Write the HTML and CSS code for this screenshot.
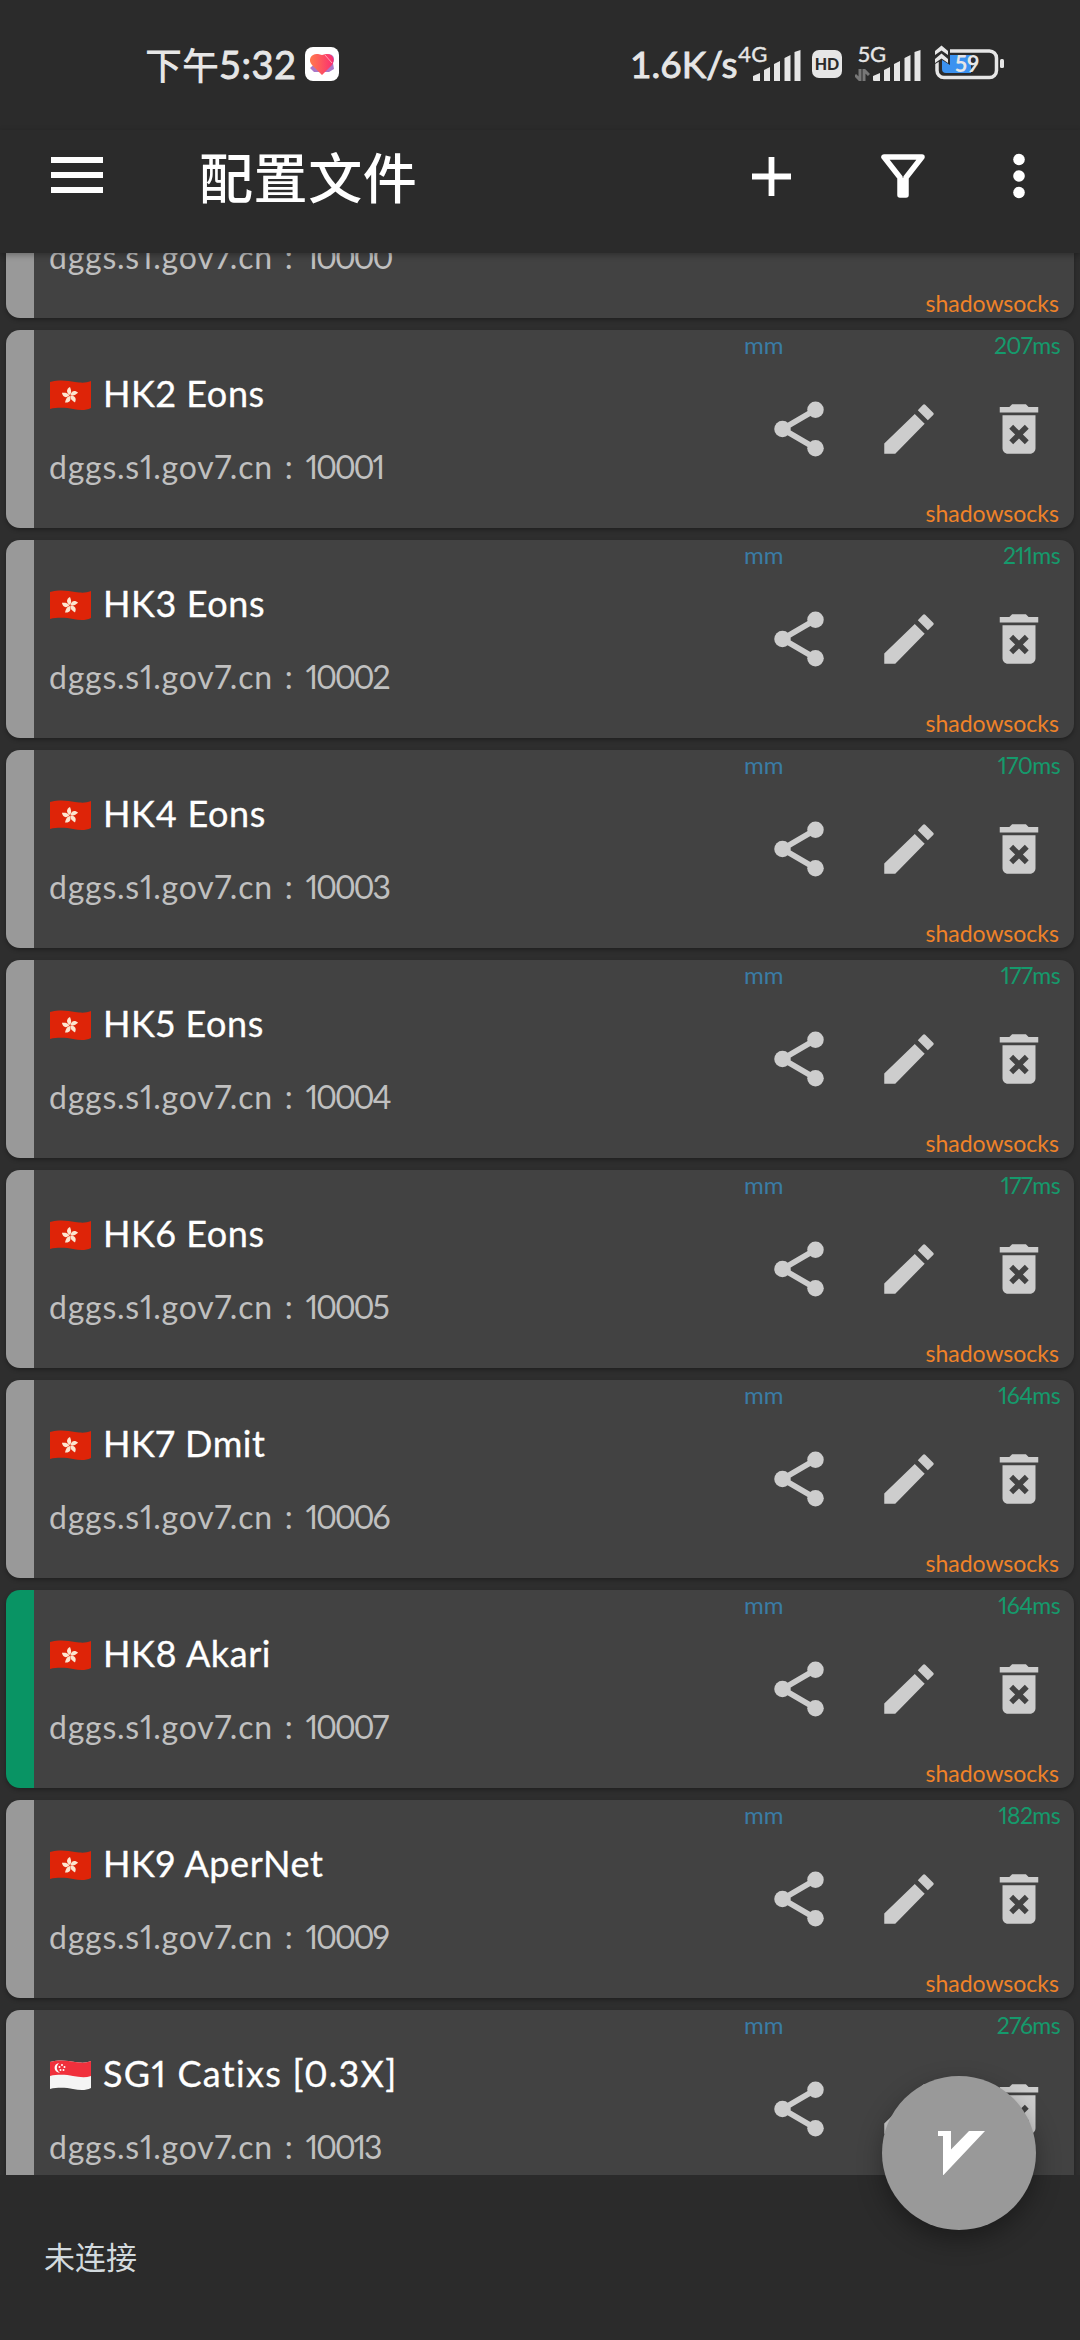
FILE: index.html
```html
<!DOCTYPE html>
<html lang="zh-CN">
<head>
    <meta charset="UTF-8">
    <meta name="viewport" content="width=device-width, initial-scale=1.0">
    <title>配置文件</title>
    <link rel="stylesheet" href="styles.css">
</head>
<body>
    <!-- Shared icons -->
    <svg class="sprites">
        <symbol id="share" viewBox="0 0 24 24">
            <path d="M6 12L18 5M6 12l12 7" fill="none" stroke="currentColor" stroke-width="2"/>
            <circle cx="6" cy="12" r="3"/><circle cx="18" cy="5" r="3"/><circle cx="18" cy="19" r="3"/>
        </symbol>
        <symbol id="edit" viewBox="0 0 24 24">
            <path d="M3 17.25V21h4l10.700-10.900-3.600-3.600L3 17.250zM20.800 6.900c.25-.25.25-.55 0-.8l-2.900-2.900c-.25-.25-.55-.25-.8 0l-1.900 2 3.650 3.650 1.950-1.950z"/>
        </symbol>
        <symbol id="delete" viewBox="0 0 24 24">
            <path d="M6 19c0 1.1.9 2 2 2h8c1.1 0 2-.9 2-2V7H6v12zm2.46-7.12l1.41-1.41L12 12.59l2.12-2.12 1.41 1.41L13.41 14l2.12 2.12-1.41 1.41L12 15.41l-2.12 2.12-1.41-1.41L10.59 14l-2.13-2.12zM15.5 4l-1-1h-5l-1 1H5v2h14V4z"/>
        </symbol>
        <symbol id="hk" viewBox="0 0 43 31">
            <path d="M1 2C12-1 19 1 26 2s11 1 16-1v27c-6 3-12 2-18 1s-14-2-23 0z" fill="#de2408"/>
            <g fill="#fbe6d0">
                <path d="M21 15c-4-2-4-6 0-8 1 3 2 5 0 8z"/>
                <path d="M21 15c-4-2-4-6 0-8 1 3 2 5 0 8z" transform="rotate(72 21 15.5)"/>
                <path d="M21 15c-4-2-4-6 0-8 1 3 2 5 0 8z" transform="rotate(144 21 15.5)"/>
                <path d="M21 15c-4-2-4-6 0-8 1 3 2 5 0 8z" transform="rotate(216 21 15.5)"/>
                <path d="M21 15c-4-2-4-6 0-8 1 3 2 5 0 8z" transform="rotate(288 21 15.5)"/>
            </g>
        </symbol>
        <symbol id="sg" viewBox="0 0 43 31">
            <path d="M1 2C12-1 19 1 26 2s11 1 16-1v27c-6 3-12 2-18 1s-14-2-23 0z" fill="#f4f4f4"/>
            <path d="M1 2C12-1 19 1 26 2s11 1 16-1v15c-6 2-12 1-18 0s-14-2-23 0z" fill="#f0303c"/>
            <path d="M10 3c-6 1-6 9 1 10-4-3-4-7-1-10z" fill="#fff"/>
            <g fill="#fff"><circle cx="13" cy="5" r="1"/><circle cx="10.5" cy="7" r="1"/><circle cx="15.5" cy="7" r="1"/><circle cx="11.5" cy="10" r="1"/><circle cx="14.5" cy="10" r="1"/></g>
        </symbol>
        <symbol id="signal" viewBox="0 0 48 31">
            <path d="M0 26l7-3v8H1q-1 0-1-1zM11 20l6-3v14h-6zM21 14l6-3v20h-6zM31.500 8l6-3v26h-6zM41.500 2l6-2v31h-6z"/>
        </symbol>
    </svg>

    <div class="status-bar">
        <div class="clock"><span class="clock-cn">下午</span><span class="clock-num">5:32</span></div>
        <svg class="app-icon" viewBox="0 0 34 34">
            <defs>
                <linearGradient id="heart" x1="0" y1="0" x2="1" y2="0">
                    <stop offset="0" stop-color="#ff7a4d"/><stop offset="1" stop-color="#fb2d72"/>
                </linearGradient>
            </defs>
            <rect width="34" height="34" rx="8" fill="#fff"/>
            <path d="M20 8q6-2 8 1t0 7l1 6-5 3H9l-4-4z" fill="#a978c8"/>
            <path d="M17 28L7 18C2 12 7 6 13 7l4 1 4-1c6-1 10 5 6 11z" fill="url(#heart)"/>
            <path d="M20 8l7 8" stroke="#ffa0b4" stroke-width="1"/>
        </svg>
        <div class="speed">1.6K/s</div>
        <div class="network">
            <span class="network-type">4G</span>
            <svg class="signal"><use href="#signal"/></svg>
        </div>
        <div class="hd">HD</div>
        <div class="network second">
            <span class="network-type">5G</span>
            <svg class="traffic" viewBox="0 0 15 12"><path d="M5 0v11L0 6M9 12V1l5 5" fill="none" stroke="#777" stroke-width="3"/></svg>
            <svg class="signal"><use href="#signal"/></svg>
        </div>
        <div class="battery">
            <svg viewBox="0 0 70 36">
                <rect x="2" y="6" width="59.5" height="26.5" rx="7" fill="none" stroke="#e6e6e6" stroke-width="3.5"/>
                <rect x="65" y="14" width="4" height="9" rx="1.5" fill="#e6e6e6"/>
                <path d="M7 10h29v18H11q-4 0-4-4z" fill="#3b92f0"/>
                <path d="M0 0h15v20l-8-5-7 4z" fill="#2b2b2b"/>
                <path d="M0 6l6.500-5.500L13 6v4L6.500 5.500 0 10zM0 14l6.500-5.500L13 14v4l-6.500-4.500L0 18z" fill="#e6e6e6"/>
            </svg>
            <span class="battery-level">59</span>
        </div>
    </div>

    <div class="toolbar">
        <svg class="menu-icon" viewBox="0 0 52 36"><path d="M0 3h52M0 18h52M0 33h52" stroke="#fff" stroke-width="6"/></svg>
        <h1 class="toolbar-title">配置文件</h1>
        <svg class="add-icon" viewBox="0 0 39 39"><path d="M19.500 0v39M0 19.500h39" stroke="#fff" stroke-width="5.8"/></svg>
        <svg class="filter-icon" viewBox="0 0 44 44">
            <path d="M3 3h38L25 23.500v17.500h-6V23.500z" fill="none" stroke="#fff" stroke-width="5.5" stroke-linejoin="round"/>
            <path d="M18 24h8v18h-8z" fill="#fff"/>
        </svg>
        <svg class="more-icon" viewBox="0 0 12 46"><circle cx="6" cy="6.5" r="5.8"/><circle cx="6" cy="23" r="5.8"/><circle cx="6" cy="39.5" r="5.8"/></svg>
    </div>

    <div class="list">
        <div class="card scrolled">
            <div class="card-info">
                <div class="card-address">dggs.s1.gov7.cn : <span class="port">10000</span></div>
            </div>
            <div class="card-side">
                <div class="protocol">shadowsocks</div>
            </div>
        </div>

        <div class="card">
            <div class="card-info">
                <div class="card-name"><svg class="flag"><use href="#hk"/></svg>HK2 Eons</div>
                <div class="card-address">dggs.s1.gov7.cn : <span class="port">10001</span></div>
            </div>
            <div class="card-side">
                <div class="card-tags"><span class="group">mm</span><span class="ping">207ms</span></div>
                <div class="card-actions"><svg><use href="#share"/></svg><svg><use href="#edit"/></svg><svg><use href="#delete"/></svg></div>
                <div class="protocol">shadowsocks</div>
            </div>
        </div>

        <div class="card">
            <div class="card-info">
                <div class="card-name"><svg class="flag"><use href="#hk"/></svg>HK3 Eons</div>
                <div class="card-address">dggs.s1.gov7.cn : <span class="port">10002</span></div>
            </div>
            <div class="card-side">
                <div class="card-tags"><span class="group">mm</span><span class="ping">211ms</span></div>
                <div class="card-actions"><svg><use href="#share"/></svg><svg><use href="#edit"/></svg><svg><use href="#delete"/></svg></div>
                <div class="protocol">shadowsocks</div>
            </div>
        </div>

        <div class="card">
            <div class="card-info">
                <div class="card-name"><svg class="flag"><use href="#hk"/></svg>HK4 Eons</div>
                <div class="card-address">dggs.s1.gov7.cn : <span class="port">10003</span></div>
            </div>
            <div class="card-side">
                <div class="card-tags"><span class="group">mm</span><span class="ping">170ms</span></div>
                <div class="card-actions"><svg><use href="#share"/></svg><svg><use href="#edit"/></svg><svg><use href="#delete"/></svg></div>
                <div class="protocol">shadowsocks</div>
            </div>
        </div>

        <div class="card">
            <div class="card-info">
                <div class="card-name"><svg class="flag"><use href="#hk"/></svg>HK5 Eons</div>
                <div class="card-address">dggs.s1.gov7.cn : <span class="port">10004</span></div>
            </div>
            <div class="card-side">
                <div class="card-tags"><span class="group">mm</span><span class="ping">177ms</span></div>
                <div class="card-actions"><svg><use href="#share"/></svg><svg><use href="#edit"/></svg><svg><use href="#delete"/></svg></div>
                <div class="protocol">shadowsocks</div>
            </div>
        </div>

        <div class="card">
            <div class="card-info">
                <div class="card-name"><svg class="flag"><use href="#hk"/></svg>HK6 Eons</div>
                <div class="card-address">dggs.s1.gov7.cn : <span class="port">10005</span></div>
            </div>
            <div class="card-side">
                <div class="card-tags"><span class="group">mm</span><span class="ping">177ms</span></div>
                <div class="card-actions"><svg><use href="#share"/></svg><svg><use href="#edit"/></svg><svg><use href="#delete"/></svg></div>
                <div class="protocol">shadowsocks</div>
            </div>
        </div>

        <div class="card">
            <div class="card-info">
                <div class="card-name"><svg class="flag"><use href="#hk"/></svg>HK7 Dmit</div>
                <div class="card-address">dggs.s1.gov7.cn : <span class="port">10006</span></div>
            </div>
            <div class="card-side">
                <div class="card-tags"><span class="group">mm</span><span class="ping">164ms</span></div>
                <div class="card-actions"><svg><use href="#share"/></svg><svg><use href="#edit"/></svg><svg><use href="#delete"/></svg></div>
                <div class="protocol">shadowsocks</div>
            </div>
        </div>

        <div class="card selected">
            <div class="card-info">
                <div class="card-name"><svg class="flag"><use href="#hk"/></svg>HK8 Akari</div>
                <div class="card-address">dggs.s1.gov7.cn : <span class="port">10007</span></div>
            </div>
            <div class="card-side">
                <div class="card-tags"><span class="group">mm</span><span class="ping">164ms</span></div>
                <div class="card-actions"><svg><use href="#share"/></svg><svg><use href="#edit"/></svg><svg><use href="#delete"/></svg></div>
                <div class="protocol">shadowsocks</div>
            </div>
        </div>

        <div class="card">
            <div class="card-info">
                <div class="card-name"><svg class="flag"><use href="#hk"/></svg>HK9 AperNet</div>
                <div class="card-address">dggs.s1.gov7.cn : <span class="port">10009</span></div>
            </div>
            <div class="card-side">
                <div class="card-tags"><span class="group">mm</span><span class="ping">182ms</span></div>
                <div class="card-actions"><svg><use href="#share"/></svg><svg><use href="#edit"/></svg><svg><use href="#delete"/></svg></div>
                <div class="protocol">shadowsocks</div>
            </div>
        </div>

        <div class="card">
            <div class="card-info">
                <div class="card-name wide"><svg class="flag"><use href="#sg"/></svg>SG1 Catixs [0.3X]</div>
                <div class="card-address">dggs.s1.gov7.cn : <span class="port">10013</span></div>
            </div>
            <div class="card-side">
                <div class="card-tags"><span class="group">mm</span><span class="ping">276ms</span></div>
                <div class="card-actions"><svg><use href="#share"/></svg><svg><use href="#edit"/></svg><svg><use href="#delete"/></svg></div>
            </div>
        </div>
    </div>

    <div class="footer">
        <span>未连接</span>
        <button class="fab">
            <svg viewBox="0 0 47 44"><path d="M0 0h13v18.500L31 0h16L5.500 44H5V5H0z"/></svg>
        </button>
    </div>
</body>
</html>
```
FILE: styles.css
```css
* {
    box-sizing: border-box;
}

body {
    margin: 0;
    width: 1080px;
    height: 2340px;
    display: flex;
    flex-direction: column;
    overflow: hidden;
    background: #2b2b2b;
    color: #fff;
    font-family: Lato, 'Noto Sans CJK SC', sans-serif;
    font-variant-numeric: proportional-nums;
}

svg {
    display: block;
    flex: none;
    fill: currentColor;
}

.sprites {
    position: absolute;
    width: 0;
    height: 0;
}

/* Status bar */
.status-bar {
    height: 130px;
    flex: none;
    display: flex;
    align-items: flex-start;
    padding: 45px 0 0 145px;
    color: #e6e6e6;
}

.clock {
    display: flex;
    width: 160px;
    margin-top: -1px;
    font-weight: 500;
    line-height: 40px;
    white-space: nowrap;
}

.clock-cn {
    width: 74px;
    font-family: 'Noto Sans CJK SC', sans-serif;
    font-size: 37px;
}

.clock-num {
    font-size: 38px;
    font-weight: 400;
    font-variant-numeric: tabular-nums;
    letter-spacing: 0.5px;
    -webkit-text-stroke: 0.9px;
}

.app-icon {
    width: 34px;
    height: 34px;
    margin-top: 2px;
}

.speed {
    width: 107px;
    margin: -1px 0 0 291px;
    font-size: 37px;
    font-variant-numeric: tabular-nums;
    line-height: 40px;
    white-space: nowrap;
    -webkit-text-stroke: 0.9px;
}

.network {
    position: relative;
    width: 64px;
    height: 36px;
    display: flex;
    align-items: flex-end;
    justify-content: flex-end;
}

.network.second {
    width: 66px;
    margin-left: 13px;
    gap: 3px;
}

.network-type {
    position: absolute;
    left: 1px;
    top: -3px;
    font-size: 22px;
    line-height: 24px;
    -webkit-text-stroke: 0.4px;
}

.network.second .network-type {
    left: 3px;
}

.signal {
    width: 48px;
    height: 31px;
}

.traffic {
    width: 15px;
    height: 12px;
}

.hd {
    width: 30px;
    height: 28px;
    margin: 5px 0 0 11px;
    border-radius: 7px;
    background: #e6e6e6;
    color: #2b2b2b;
    font-size: 16px;
    font-weight: 900;
    line-height: 28px;
    text-align: center;
}

.battery {
    position: relative;
    width: 70px;
    height: 36px;
    margin-left: 14px;
}

.battery-level {
    position: absolute;
    left: 20px;
    top: 7px;
    font-size: 22px;
    font-weight: bold;
    line-height: 24px;
}

/* Toolbar */
.toolbar {
    position: relative;
    z-index: 1;
    height: 123px;
    flex: none;
    display: flex;
    align-items: center;
    padding: 0 55px 31px 51px;
    box-shadow: 0 2px 6px rgba(0, 0, 0, 0.3);
}

.menu-icon {
    width: 52px;
    height: 36px;
    margin-bottom: 2px;
}

.toolbar-title {
    margin: 0 0 0 96px;
    flex: 1;
    font-family: 'Noto Sans CJK SC', sans-serif;
    font-size: 54px;
    font-weight: 500;
    letter-spacing: 0.6px;
    line-height: 60px;
}

.add-icon {
    width: 39px;
    height: 39px;
}

.filter-icon {
    width: 44px;
    height: 44px;
    margin: 0 88px 0 90px;
}

.more-icon {
    width: 12px;
    height: 46px;
}

/* Profile list */
.list {
    height: 1922px;
    flex: none;
    display: flex;
    flex-direction: column;
    gap: 12px;
    padding: 0 6px;
    overflow: hidden;
    background: #2e2e2e;
}

.card {
    height: 198px;
    flex: none;
    display: flex;
    overflow: hidden;
    border-left: 28px solid #999;
    border-radius: 14px;
    background: #424242;
    box-shadow: 0 2px 4px rgba(0, 0, 0, 0.3);
}

.card.selected {
    border-left-color: #099464;
}

.card-info {
    flex: 1;
    padding: 39px 0 0 15px;
    white-space: nowrap;
}

.card-name {
    display: flex;
    align-items: center;
    font-size: 36px;
    letter-spacing: 0.6px;
    line-height: 48px;
    -webkit-text-stroke: 0.3px;
}

.card-name.wide {
    letter-spacing: 1.3px;
}

.flag {
    width: 43px;
    height: 31px;
    margin: 4px 11px 0 0;
}

.card-address {
    margin-top: 28px;
    color: #c0c0c0;
    font-size: 32px;
    letter-spacing: 0.75px;
    word-spacing: 3px;
    line-height: 44px;
}

.port {
    letter-spacing: -2.2px;
}

.card-side {
    width: 330px;
    display: flex;
    flex-direction: column;
    font-size: 23px;
    line-height: 30px;
}

.card-tags {
    display: flex;
    justify-content: space-between;
    padding-right: 14px;
}

.group {
    color: #3a7ca5;
    font-size: 24px;
}

.ping {
    color: #159a6c;
    letter-spacing: -0.6px;
}

.card-actions {
    height: 138px;
    display: flex;
    align-items: center;
    gap: 44px;
    padding-left: 22px;
    color: #cdcdcd;
}

.card-actions svg {
    width: 66px;
    height: 66px;
}

.protocol {
    padding-right: 15px;
    color: #f08228;
    text-align: right;
}

/* Card that is partly scrolled under the toolbar */
.card.scrolled {
    height: 65px;
    border-radius: 0 0 14px 14px;
}

.card.scrolled .card-info {
    padding-top: 0;
}

.card.scrolled .card-address {
    margin-top: -18px;
}

.card.scrolled .card-side {
    justify-content: flex-end;
}

/* Connection state */
.footer {
    position: relative;
    flex: 1;
    padding: 58px 44px;
    color: #d3dade;
    font-family: 'Noto Sans CJK SC', sans-serif;
    font-size: 31px;
    line-height: 46px;
}

.fab {
    position: absolute;
    top: -99px;
    right: 44px;
    width: 154px;
    height: 154px;
    display: flex;
    align-items: center;
    justify-content: center;
    padding: 0 0 0 4px;
    border: none;
    border-radius: 50%;
    background: #999;
    color: #fff;
    box-shadow: 0 10px 24px rgba(0, 0, 0, 0.35);
}

.fab svg {
    width: 47px;
    height: 44px;
}
```
